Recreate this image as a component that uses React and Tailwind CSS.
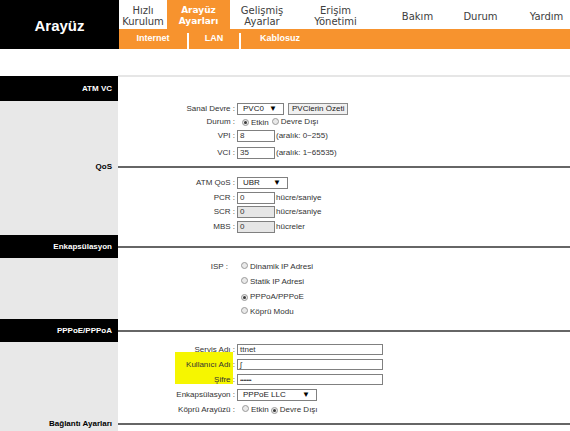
import React from 'react';

const ORANGE = 'bg-[#f7932e]';

const Radio = ({ on }) => (
  <span className="inline-flex items-center justify-center w-[7px] h-[7px] rounded-full border border-[#9a9a9a] bg-[#e9e9e9] shrink-0">
    {on && <span className="w-[3px] h-[3px] rounded-full bg-[#3a3a3a]" />}
  </span>
);

const Box = ({ w, h = 'h-[12px]', value, gray }) => (
  <div
    className={`${w} ${h} border border-[#808080] flex items-center pl-[2px] text-[8px] leading-none text-[#333] ${
      gray ? 'bg-[#e6e6e6]' : 'bg-white'
    }`}
  >
    {value}
  </div>
);

const Select = ({ w, value }) => (
  <div className={`${w} h-[12px] border border-[#808080] bg-white flex items-center justify-between pl-[5px] pr-[6px] text-[8px] leading-none text-[#222]`}>
    <span>{value}</span>
    <span className="text-[8px] text-black">▼</span>
  </div>
);

const Row = ({ label, h, labelPad = 'pr-0', children }) => (
  <div className={`flex items-center ${h}`}>
    <div className={`w-[117px] text-right whitespace-nowrap ${labelPad}`}>{label}</div>
    <div className="flex items-center ml-[2px] whitespace-nowrap">{children}</div>
  </div>
);

// section divider: left label + grey rule on the right
const Divider = ({ label, dark, h }) => (
  <div className={`flex ${h}`}>
    <div
      className={`w-[118px] flex items-center justify-end pr-[6px] text-[8px] font-bold ${
        dark ? 'bg-black text-white' : 'bg-[#e8e8e8] text-black'
      }`}
    >
      {label}
    </div>
    <div className="flex-1 flex items-center">
      <div className="w-full h-[2px] bg-[#666]" />
    </div>
  </div>
);

const Content = ({ h, pt = 'pt-0', children, extra }) => (
  <div className={`flex ${h} relative`}>
    {extra}
    <div className="w-[118px] bg-[#e8e8e8]" />
    <div className={`flex-1 flex flex-col relative z-10 ${pt}`}>{children}</div>
  </div>
);

const navItems = [
  { t: ['Hızlı', 'Kurulum'], w: 'w-[48px]' },
  { t: ['Arayüz', 'Ayarları'], w: 'w-[63px]', active: true },
  { t: ['Gelişmiş', 'Ayarlar'], w: 'w-[64px]' },
  { t: ['Erişim', 'Yönetimi'], w: 'w-[83px]' },
  { t: ['Bakım'], w: 'w-[81px]' },
  { t: ['Durum'], w: 'w-[45px]' },
  { t: ['Yardım'], w: 'w-[87px]' },
];

export default function App() {
  return (
    <div className="w-[570px] h-[431px] overflow-hidden bg-white text-[#333] font-['Liberation_Sans',Arial,sans-serif]">
      {/* header */}
      <div className="flex h-[49px]">
        <div className="w-[119px] bg-black flex items-center justify-center pt-[3px] text-white font-bold text-[15px] font-['Liberation_Sans_Narrow','Liberation_Sans',sans-serif]">
          Arayüz
        </div>
        <div className="flex-1 flex flex-col overflow-hidden">
          <div className="h-[29px] flex font-['DejaVu_Sans',sans-serif]">
            {navItems.map((n) => (
              <div
                key={n.t.join()}
                className={`${n.w} shrink-0 flex flex-col items-center justify-center pt-[3px] leading-[11px] ${
                  n.active ? `${ORANGE} text-white font-bold text-[9px]` : 'text-[#404040] text-[10px]'
                }`}
              >
                {n.t.map((l) => (
                  <span key={l}>{l}</span>
                ))}
              </div>
            ))}
          </div>
          <div className={`h-[20px] ${ORANGE} flex text-white font-bold text-[9px]`}>
            <div className="w-[68px] flex items-center justify-center">Internet</div>
            <div className="w-[2px] mt-[4px] bg-white" />
            <div className="w-[50px] flex items-center justify-center">LAN</div>
            <div className="w-[2px] mt-[4px] bg-white" />
            <div className="w-[78px] flex items-center justify-center">Kablosuz</div>
          </div>
        </div>
      </div>

      <div className="h-[26px]" />

      {/* ATM VC */}
      <div className="flex h-[26px]">
        <div className="w-[118px] flex flex-col justify-end">
          <div className="h-[25px] bg-black text-white text-[8px] font-bold flex items-center justify-end pr-[6px]">ATM VC</div>
        </div>
        <div className="flex-1 border-t-2 border-[#e6e6e6]" />
      </div>

      <div className="text-[8px] leading-none">
        <Content h="h-[59px]" pt="pt-[1px]">
          <Row label="Sanal Devre :" h="h-[13px]">
            <Select w="w-[47px]" value="PVC0" />
            <div className="ml-[4px] h-[12px] px-[3px] border border-[#8a8a8a] bg-[#f0f0f0] flex items-center text-[8px] text-[#222]">
              PVClerin Özeti
            </div>
          </Row>
          <Row label="Durum :" h="h-[14px]">
            <span className="ml-[5px]"><Radio on /></span>
            <span className="ml-[2px] mt-[2px]">Etkin</span>
            <span className="ml-[3px]"><Radio /></span>
            <span className="ml-[2px]">Devre Dışı</span>
          </Row>
          <Row label="VPI :" h="h-[13px]">
            <Box w="w-[38px]" value="8" />
            <span className="ml-[1px]">(aralık: 0~255)</span>
          </Row>
          <div className="h-[4px]" />
          <Row label="VCI :" h="h-[13px]">
            <Box w="w-[38px]" value="35" />
            <span className="ml-[1px]">(aralık: 1~65535)</span>
          </Row>
        </Content>

        <Divider label="QoS" h="h-[14px]" />

        <Content h="h-[61px]" pt="pt-[3px]">
          <div className="flex flex-col gap-[2.5px]">
            <Row label="ATM QoS :" h="h-[12px]">
              <Select w="w-[51px]" value="UBR" />
            </Row>
            <Row label="PCR :" h="h-[12px]">
              <Box w="w-[38px]" value="0" />
              <span className="ml-[1px]">hücre/saniye</span>
            </Row>
            <Row label="SCR :" h="h-[12px]">
              <Box w="w-[38px]" value="0" gray />
              <span className="ml-[1px]">hücre/saniye</span>
            </Row>
            <Row label="MBS :" h="h-[12px]">
              <Box w="w-[38px]" value="0" gray />
              <span className="ml-[1px]">hücreler</span>
            </Row>
          </div>
        </Content>

        <Divider label="Enkapsülasyon" dark h="h-[23px]" />

        <Content h="h-[61px]" pt="pt-[1px]">
          <Row label="ISP :" h="h-[15px]" labelPad="pr-[7px]">
            <span className="ml-[4px]"><Radio /></span>
            <span className="ml-[2px]">Dinamik IP Adresi</span>
          </Row>
          <Row label="" h="h-[15px]">
            <span className="ml-[4px]"><Radio /></span>
            <span className="ml-[2px]">Statik IP Adresi</span>
          </Row>
          <Row label="" h="h-[15px]">
            <span className="ml-[4px]"><Radio on /></span>
            <span className="ml-[2px]">PPPoA/PPPoE</span>
          </Row>
          <Row label="" h="h-[15px]">
            <span className="ml-[4px]"><Radio /></span>
            <span className="ml-[2px]">Köprü Modu</span>
          </Row>
        </Content>

        <Divider label="PPPoE/PPPoA" dark h="h-[23px]" />

        <Content
          h="h-[75px]"
          extra={<div className="absolute left-[175px] top-[10px] w-[58px] h-[32px] bg-[#f6f600] z-0" />}
        >
          <Row label="Servis Adı :" h="h-[15px]">
            <Box w="w-[146px]" h="h-[11px]" value="ttnet" />
          </Row>
          <Row label="Kullanıcı Adı :" h="h-[15px]">
            <Box w="w-[146px]" h="h-[11px]" value="ʃ" />
          </Row>
          <Row label="Şifre :" h="h-[15px]">
            <Box w="w-[146px]" h="h-[11px]" value={<span className="text-[6px] tracking-[-0.5px]">•••••••</span>} />
          </Row>
          <Row label="Enkapsülasyon :" h="h-[15px]">
            <Select w="w-[80px]" value="PPPoE LLC" />
          </Row>
          <Row label="Köprü Arayüzü :" h="h-[15px]">
            <span className="ml-[5px]"><Radio /></span>
            <span className="ml-[2px]">Etkin</span>
            <span className="ml-[2px]"><Radio on /></span>
            <span className="ml-[2px]">Devre Dışı</span>
          </Row>
        </Content>

        <Divider label="Bağlantı Ayarları" h="h-[14px]" />
      </div>
    </div>
  );
}
